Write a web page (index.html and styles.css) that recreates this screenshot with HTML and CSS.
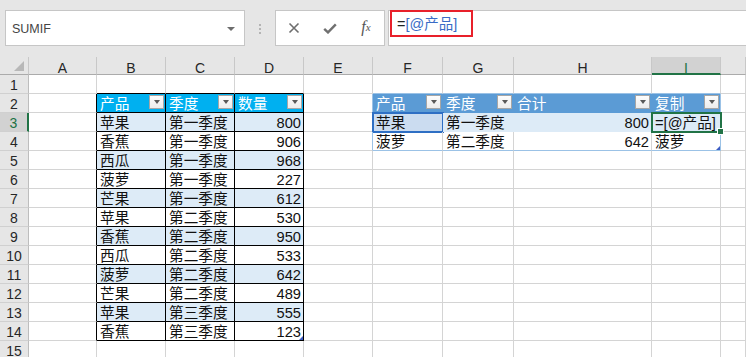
FILE: index.html
```html
<!DOCTYPE html>
<html lang="zh-CN">
<head>
  <meta charset="UTF-8">
  <title>SUMIF</title>
  <link rel="stylesheet" href="styles.css">
</head>
<body>

<div class="toolbar">
  <div class="namebox"><span>SUMIF</span><span class="caret"></span></div>
  <div class="grip"><i></i><i></i><i></i></div>
  <div class="buttons">
    <span class="btn"><svg width="12" height="12" viewBox="0 0 12 12"><path d="M1.5 1.5 L10.5 10.5 M10.5 1.5 L1.5 10.5" stroke="#6e6e6e" stroke-width="1.6" fill="none"/></svg></span>
    <span class="btn"><svg width="14" height="11" viewBox="0 0 14 11"><path d="M1.2 5.8 L5 9.4 L12.8 1.4" stroke="#707070" stroke-width="2.4" fill="none"/></svg></span>
    <span class="btn fx">f<sub>x</sub></span>
  </div>
  <div class="formula"><span class="mark">=<span class="ref">[@产品]</span></span></div>
</div>

<div class="sheet">
  <div class="row head">
    <div class="corner"><span></span></div>
    <div class="ch">A</div><div class="ch">B</div><div class="ch">C</div><div class="ch">D</div><div class="ch">E</div>
    <div class="ch">F</div><div class="ch">G</div><div class="ch">H</div><div class="ch sel">I</div><div class="ch"></div>
  </div>

  <div class="row">
    <div class="rh">1</div>
    <div class="c"></div><div class="c ab"></div><div class="c ab"></div><div class="c ab"></div><div class="c"></div>
    <div class="c lt"></div><div class="c lt"></div><div class="c lt"></div><div class="c lt"></div><div class="c"></div>
  </div>

  <div class="row">
    <div class="rh">2</div>
    <div class="c lb"></div>
    <div class="c t1h"><span>产品</span><span class="dd"></span></div>
    <div class="c t1h"><span>季度</span><span class="dd"></span></div>
    <div class="c t1h"><span>数量</span><span class="dd"></span></div>
    <div class="c ll"></div>
    <div class="c t2h"><span>产品</span><span class="dd"></span></div>
    <div class="c t2h"><span>季度</span><span class="dd"></span></div>
    <div class="c t2h"><span>合计</span><span class="dd"></span></div>
    <div class="c t2h end"><span>复制</span><span class="dd"></span></div>
    <div class="c"></div>
  </div>

  <div class="row">
    <div class="rh sel">3</div>
    <div class="c lb"></div>
    <div class="c t1 band">苹果</div><div class="c t1 band">第一季度</div><div class="c t1 band num">800</div>
    <div class="c ll"></div>
    <div class="c t2b picked">苹果</div><div class="c t2b">第一季度</div><div class="c t2b num">800</div>
    <div class="c t2b end active">=[@产品]</div>
    <div class="c"></div>
  </div>

  <div class="row">
    <div class="rh">4</div>
    <div class="c lb"></div>
    <div class="c t1">香蕉</div><div class="c t1">第一季度</div><div class="c t1 num">906</div>
    <div class="c ll"></div>
    <div class="c t2e">菠萝</div><div class="c t2e">第二季度</div><div class="c t2e num">642</div>
    <div class="c t2e end rz">菠萝</div>
    <div class="c"></div>
  </div>

  <div class="row">
    <div class="rh">5</div>
    <div class="c lb"></div>
    <div class="c t1 band">西瓜</div><div class="c t1 band">第一季度</div><div class="c t1 band num">968</div>
    <div class="c"></div><div class="c"></div><div class="c"></div><div class="c"></div><div class="c"></div><div class="c"></div>
  </div>

  <div class="row">
    <div class="rh">6</div>
    <div class="c lb"></div>
    <div class="c t1">菠萝</div><div class="c t1">第一季度</div><div class="c t1 num">227</div>
    <div class="c"></div><div class="c"></div><div class="c"></div><div class="c"></div><div class="c"></div><div class="c"></div>
  </div>

  <div class="row">
    <div class="rh">7</div>
    <div class="c lb"></div>
    <div class="c t1 band">芒果</div><div class="c t1 band">第一季度</div><div class="c t1 band num">612</div>
    <div class="c"></div><div class="c"></div><div class="c"></div><div class="c"></div><div class="c"></div><div class="c"></div>
  </div>

  <div class="row">
    <div class="rh">8</div>
    <div class="c lb"></div>
    <div class="c t1">苹果</div><div class="c t1">第二季度</div><div class="c t1 num">530</div>
    <div class="c"></div><div class="c"></div><div class="c"></div><div class="c"></div><div class="c"></div><div class="c"></div>
  </div>

  <div class="row">
    <div class="rh">9</div>
    <div class="c lb"></div>
    <div class="c t1 band">香蕉</div><div class="c t1 band">第二季度</div><div class="c t1 band num">950</div>
    <div class="c"></div><div class="c"></div><div class="c"></div><div class="c"></div><div class="c"></div><div class="c"></div>
  </div>

  <div class="row">
    <div class="rh">10</div>
    <div class="c lb"></div>
    <div class="c t1">西瓜</div><div class="c t1">第二季度</div><div class="c t1 num">533</div>
    <div class="c"></div><div class="c"></div><div class="c"></div><div class="c"></div><div class="c"></div><div class="c"></div>
  </div>

  <div class="row">
    <div class="rh">11</div>
    <div class="c lb"></div>
    <div class="c t1 band">菠萝</div><div class="c t1 band">第二季度</div><div class="c t1 band num">642</div>
    <div class="c"></div><div class="c"></div><div class="c"></div><div class="c"></div><div class="c"></div><div class="c"></div>
  </div>

  <div class="row">
    <div class="rh">12</div>
    <div class="c lb"></div>
    <div class="c t1">芒果</div><div class="c t1">第二季度</div><div class="c t1 num">489</div>
    <div class="c"></div><div class="c"></div><div class="c"></div><div class="c"></div><div class="c"></div><div class="c"></div>
  </div>

  <div class="row">
    <div class="rh">13</div>
    <div class="c lb"></div>
    <div class="c t1 band">苹果</div><div class="c t1 band">第三季度</div><div class="c t1 band num">555</div>
    <div class="c"></div><div class="c"></div><div class="c"></div><div class="c"></div><div class="c"></div><div class="c"></div>
  </div>

  <div class="row">
    <div class="rh">14</div>
    <div class="c lb"></div>
    <div class="c t1">香蕉</div><div class="c t1">第三季度</div><div class="c t1 num rz">123</div>
    <div class="c"></div><div class="c"></div><div class="c"></div><div class="c"></div><div class="c"></div><div class="c"></div>
  </div>

  <div class="row">
    <div class="rh">15</div>
    <div class="c"></div><div class="c"></div><div class="c"></div><div class="c"></div><div class="c"></div>
    <div class="c"></div><div class="c"></div><div class="c"></div><div class="c"></div><div class="c"></div>
  </div>
</div>

</body>
</html>
```

FILE: styles.css
```css
body {
  margin: 0;
  width: 746px;
  height: 357px;
  overflow: hidden;
  background: #fff;
  font-family: "Liberation Sans", "Noto Sans CJK SC", sans-serif;
}

/* Formula bar */
.toolbar {
  display: flex;
  align-items: flex-start;
  height: 57px;
  box-sizing: border-box;
  padding: 10px 0 0 5px;
  background: #e6e6e6;
}
.namebox {
  width: 240px;
  height: 36px;
  box-sizing: border-box;
  border: 1px solid #c6c6c6;
  background: #fff;
  display: flex;
  align-items: center;
  justify-content: space-between;
  padding: 1px 9px 0 6px;
  font-size: 12.5px;
  color: #444;
}
.caret {
  width: 0;
  height: 0;
  border-left: 4px solid transparent;
  border-right: 4px solid transparent;
  border-top: 4px solid #6d6d6d;
}
.grip {
  display: flex;
  flex-direction: column;
  gap: 2px;
  margin: 14px 14px 0;
}
.grip i {
  width: 2px;
  height: 2px;
  background: #b4b4b4;
}
.buttons {
  width: 110px;
  height: 36px;
  box-sizing: border-box;
  border: 1px solid #c6c6c6;
  background: #fff;
  display: flex;
}
.btn {
  width: 36px;
  display: flex;
  align-items: center;
  justify-content: center;
}
.fx {
  font-family: "Liberation Serif", serif;
  font-style: italic;
  font-size: 16px;
  color: #555;
  padding-bottom: 3px;
}
.fx sub {
  font-size: 11px;
  vertical-align: -2px;
}
.formula {
  flex: 1;
  height: 36px;
  box-sizing: border-box;
  margin: 0 -2px 0 3px;
  border: 1px solid #c6c6c6;
  background: #fff;
  padding-left: 1px;
}
.mark {
  display: inline-block;
  width: 83px;
  height: 27px;
  box-sizing: border-box;
  margin-top: -1px;
  border: 2px solid #e8202a;
  padding: 2px 0 0 5px;
  font-size: 14.5px;
  line-height: 20px;
  color: #222;
}
.ref {
  color: #3a6cc6;
}

/* Grid */
.row {
  display: grid;
  grid-template-columns: 29px 68px 69px 69px 69px 69px 70px 71px 138px 69px 25px;
  height: 19px;
}
.row.head {
  height: 18px;
}
.c, .rh, .ch, .corner {
  box-sizing: border-box;
  border-right: 1px solid #d4d4d4;
  border-bottom: 1px solid #d4d4d4;
  white-space: nowrap;
}
.c {
  height: 19px;
  padding: 3px 3px 0;
  font-size: 14.67px;
  line-height: 15px;
  color: #111;
}
.ch {
  height: 18px;
  background: #e6e6e6;
  border-right-color: #c8c8c8;
  border-bottom-color: #ababab;
  text-align: center;
  font-size: 14px;
  line-height: 18px;
  padding-top: 2px;
  color: #262626;
}
.ch.sel {
  background: #d2d2d2;
  color: #217346;
  border-bottom: 2px solid #217346;
}
.corner {
  height: 18px;
  background: #e6e6e6;
  border-right-color: #c8c8c8;
  border-bottom-color: #ababab;
  display: flex;
  justify-content: flex-end;
  align-items: flex-end;
  padding: 0 4px 3px 0;
}
.corner span {
  width: 0;
  height: 0;
  border-left: 10px solid transparent;
  border-bottom: 10px solid #b8b8b8;
}
.rh {
  height: 19px;
  background: #e6e6e6;
  border-right-color: #bdbdbd;
  border-bottom-color: #d0d0d0;
  text-align: center;
  font-size: 14px;
  line-height: 15px;
  padding-top: 3px;
  color: #262626;
}
.rh.sel {
  background: #d2d2d2;
  color: #217346;
  border-right: 2px solid #217346;
}
.num {
  text-align: right;
  padding-right: 2px;
}

/* Table 1 */
.ab { border-bottom-color: #000; }
.lb { border-right-color: #000; }
.t1, .t1h {
  border-right-color: #000;
  border-bottom-color: #000;
}
.t1h {
  background: #00b0f0;
}
.band {
  background: #ddebf7;
}
.t1h, .t2h {
  display: flex;
  justify-content: space-between;
  padding: 0 1px 0 3px;
  color: #fff;
}
.t1h span:first-child, .t2h span:first-child {
  padding-top: 3px;
}
.dd {
  width: 15px;
  height: 14px;
  box-sizing: border-box;
  margin-top: 1px;
  border: 1px solid #a6a6a6;
  background: linear-gradient(#fdfdfd, #ececec);
  display: flex;
  align-items: center;
  justify-content: center;
}
.dd::before {
  content: "";
  border-left: 3.5px solid transparent;
  border-right: 3.5px solid transparent;
  border-top: 4px solid #595959;
}

/* Table 2 */
.lt { border-bottom-color: #9bc2e6; }
.ll { border-right-color: #9bc2e6; }
.t2h {
  background: #5b9bd5;
  border-right-color: #5b9bd5;
  border-bottom-color: #5b9bd5;
}
.t2b {
  background: #ddebf7;
  border-right-color: #ddebf7;
  border-bottom-color: #ddebf7;
}
.t2e {
  border-bottom-color: #9bc2e6;
}
.end {
  border-right-color: #9bc2e6;
}
.picked {
  background: #cbdcf0;
  outline: 2px solid #2e6fc4;
  outline-offset: -1px;
}
.active {
  position: relative;
  z-index: 2;
  outline: 2px solid #217346;
  outline-offset: -1px;
}
.active::after {
  content: "";
  position: absolute;
  right: -4px;
  bottom: -4px;
  width: 5px;
  height: 5px;
  background: #217346;
  border: 1px solid #fff;
}
.rz {
  position: relative;
}
.rz::after {
  content: "";
  position: absolute;
  right: 0;
  bottom: 0;
  border-left: 4px solid transparent;
  border-bottom: 4px solid #3c5cc4;
}
```
